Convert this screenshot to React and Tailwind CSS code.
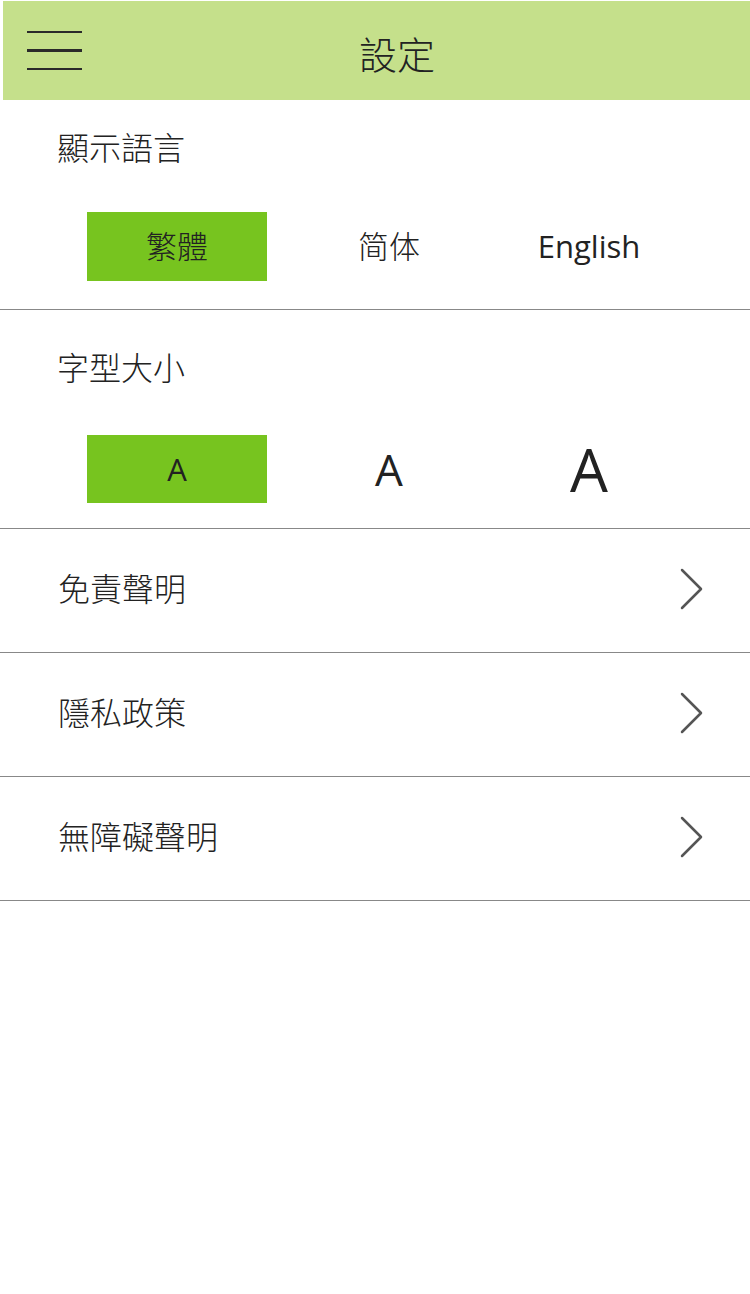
import React from "react";

const font = { fontFamily: '"Open Sans","Noto Sans CJK TC",sans-serif' };

function Chevron() {
  return (
    <svg width="24" height="42" viewBox="0 0 24 42" fill="none">
      <polyline points="2,2 21,21 2,40" stroke="#555" strokeWidth="2.5" strokeLinecap="round" strokeLinejoin="round" />
    </svg>
  );
}

function Row({ label }) {
  return (
    <div className="flex h-[124px] items-center justify-between border-b border-[#888] pb-[4px] pl-[58px] pr-[46px]">
      <span className="text-[32px] leading-[40px] text-[#222]">{label}</span>
      <Chevron />
    </div>
  );
}

export default function App() {
  return (
    <div className="min-h-[1294px] w-[750px] bg-white font-light" style={font}>
      <div className="ml-[3px] mt-[1px] flex h-[99px] items-center bg-[#c5e08b]">
        <div className="flex w-[100px] flex-col gap-[16px] pl-[24px]">
          <div className="h-[2.5px] w-[55px] bg-[#2a2a2a]" />
          <div className="h-[2.5px] w-[55px] bg-[#2a2a2a]" />
          <div className="h-[2.5px] w-[55px] bg-[#2a2a2a]" />
        </div>
        <div className="ml-[256px] pt-[6px] text-[38px] leading-[44px] text-[#222]">設定</div>
      </div>

      <div className="border-b border-[#888] pb-[28px]">
        <div className="pl-[57px] pt-[28px] text-[32px] leading-[40px] text-[#222]">顯示語言</div>
        <div className="mt-[44px] flex pl-[87px] text-[#222]">
          <div className="flex h-[69px] w-[180px] items-center justify-center bg-[#77c41f] text-[31px]">繁體</div>
          <div className="ml-[32px] flex h-[69px] w-[180px] items-center justify-center text-[31px]">简体</div>
          <div className="ml-[20px] flex h-[69px] w-[180px] items-center justify-center text-[31px] font-normal">English</div>
        </div>
      </div>

      <div className="border-b border-[#888] pb-[25px]">
        <div className="pl-[57px] pt-[38px] text-[32px] leading-[40px] text-[#222]">字型大小</div>
        <div className="mt-[47px] flex pl-[87px] font-normal text-[#222]">
          <div className="flex h-[68px] w-[180px] items-center justify-center bg-[#77c41f] text-[31px]">A</div>
          <div className="ml-[32px] flex h-[68px] w-[180px] items-center justify-center text-[44px]">A</div>
          <div className="ml-[20px] flex h-[68px] w-[180px] items-center justify-center text-[60px]">A</div>
        </div>
      </div>

      <Row label="免責聲明" />
      <Row label="隱私政策" />
      <Row label="無障礙聲明" />
    </div>
  );
}
